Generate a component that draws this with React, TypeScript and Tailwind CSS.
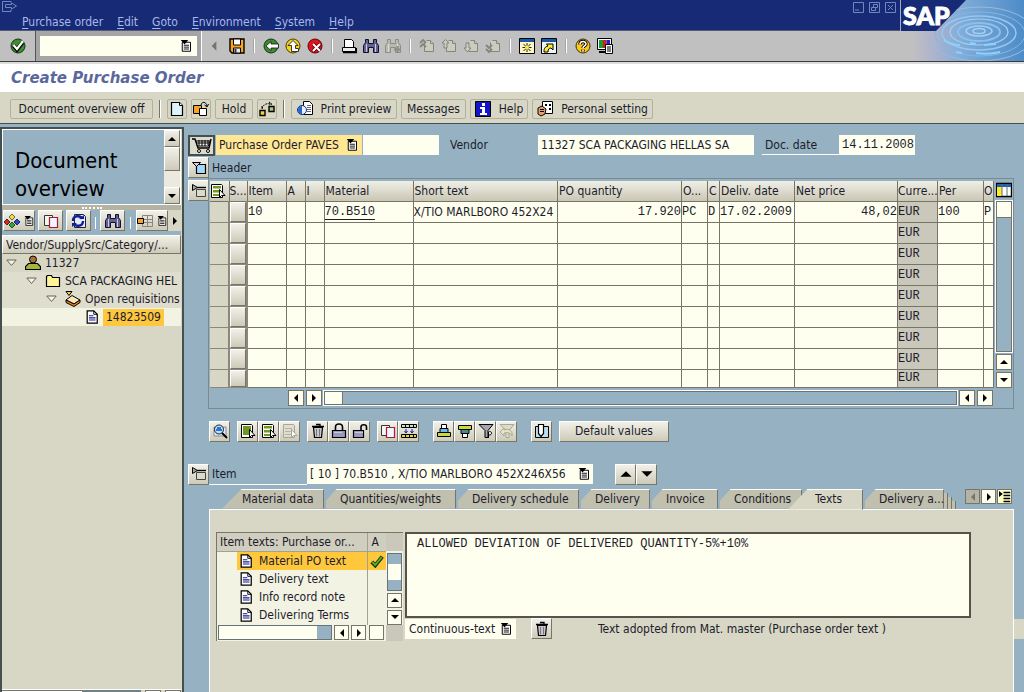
import { ReactNode, useState } from "react";
import clsx from "clsx";

type IconProps = { children: ReactNode; size?: string }

const Icon = ({ children, size = "size-4" }: IconProps) => (
  <svg viewBox="0 0 16 16" className={clsx(size, "shrink-0")} fill="none" stroke="#000" strokeWidth="1" aria-hidden="true">
    {children}
  </svg>
)

const CheckCircleIcon = () => (
  <Icon>
    <circle cx="8" cy="8" r="7" fill="#3f8a33" stroke="#123a10" />
    <path d="M3.500 7.500l3.500 4 5.500-7" stroke="#000" strokeWidth="4" />
    <path d="M3.500 7l3.500 4 6-8" stroke="#fff" strokeWidth="2.200" />
  </Icon>
)
const SaveIcon = () => (
  <Icon>
    <path d="M1 1h14v14H3l-2-2z" fill="#f5a423" strokeWidth="1.400" />
    <path d="M4.500 1h7v6h-7z" fill="#fff" />
    <path d="M4.500 10h7v5h-7z" fill="#e8e8f0" />
    <path d="M5.500 11h2v4h-2z" fill="#333" stroke="none" />
  </Icon>
)
const BackIcon = () => (
  <Icon>
    <circle cx="8" cy="8" r="7" fill="#3f8a33" stroke="#123a10" />
    <path d="M3 8l5-4.500v2.500h7.500v4H8v2.500z" fill="#fff" stroke="#111" strokeWidth=".8" />
  </Icon>
)
const ExitIcon = () => (
  <Icon>
    <circle cx="8" cy="8" r="7" fill="#f6d21c" stroke="#4a3a05" />
    <path d="M8 2.500l5 5H10.500v3h3v3h-7v-6H3z" fill="#fff" stroke="#222" strokeWidth=".9" />
  </Icon>
)
const CancelIcon = () => (
  <Icon>
    <circle cx="8" cy="8" r="7" fill="#e0121c" stroke="#5a0508" />
    <path d="M6 6l7 7M13 6l-7 7" stroke="#500" strokeWidth="3.600" />
    <path d="M6 6l7 7M13 6l-7 7" stroke="#fff" strokeWidth="2" />
  </Icon>
)
const PrintIcon = () => (
  <Icon>
    <path d="M3.500 9.500v-8h7l2 2v6z" fill="#fff" />
    <path d="M1.500 9.500h13v4h-13z" fill="#ececec" />
    <path d="M2 14.500h13.500V10" strokeWidth="1.500" />
  </Icon>
)
const BinocularsIcon = ({ dim = false }: { dim?: boolean }) => (
  <Icon>
    <g fill={dim ? "#b9b9b0" : "#62628f"} stroke={dim ? "#8d8d84" : "#10102c"}>
      <path d="M2.500 1.500h3v4h5v-4h3v3l2 3v7h-5v-5h-5v5h-5v-7l2-3z" />
      <path d="M3.500 6v8M12.500 6v8" stroke={dim ? "#dcdcd4" : "#c8c8e8"} />
      {dim && <path d="M12.500 8v7M9 11.500h7" strokeWidth="2" />}
    </g>
  </Icon>
)
const PageMoveIcon = ({ kind }: { kind: "first" | "prev" | "next" | "last" }) => (
  <Icon>
    <g stroke="#85857a" fill="#cbcbc0">
      <path d="M5.500 4.500v9h9v-8l-3-3h-4" />
      <path d="M11.500 2.500v3h3" />
      {kind == "first" && <path d="M1 5l3-3 3 3M1 9l3-3 3 3" fill="none" strokeWidth="1.800" />}
      {kind == "prev" && <path d="M1 5l3.500-3.500L8 5H6v5H3V5z" />}
      {kind == "next" && <path d="M1 10l3.500 4L8 10H6V5H3v5z" />}
      {kind == "last" && <path d="M1 7l3 3 3-3M1 11l3 3 3-3" fill="none" strokeWidth="1.800" />}
    </g>
  </Icon>
)
const NewSessionIcon = () => (
  <Icon>
    <path d="M.5 .5h15v15H.5z" fill="#fff7c4" />
    <path d="M1 1h14v3H1z" fill="#155ca8" stroke="none" />
    <path d="M8 5v9M3.500 9.500h9M4.500 6l7 7M11.500 6l-7 7" stroke="#222" />
    <circle cx="8" cy="9.500" r="2" fill="#ffe83a" stroke="none" />
  </Icon>
)
const ShortcutIcon = () => (
  <Icon>
    <path d="M.5 .5h15v15H.5z" fill="#f0f4f4" />
    <path d="M1 1h14v3H1z" fill="#155ca8" stroke="none" />
    <path d="M3 14c0-4 1-5 4-6L5.500 6H12v6l-2-2c-2 0-3 1-3 4z" fill="#ffee3a" />
  </Icon>
)
const QuestionIcon = () => (
  <Icon>
    <circle cx="8" cy="8" r="7" fill="#fbc81a" stroke="#3d3005" />
    <path d="M5 6.500c0-4 6-4 6-.5 0 2-3 1.800-3 4M8 11.500v2" stroke="#000" strokeWidth="3.400" />
    <path d="M5 6.500c0-4 6-4 6-.5 0 2-3 1.800-3 4M8 11.500v2" stroke="#fff" strokeWidth="1.600" />
  </Icon>
)
const LayoutIcon = () => (
  <Icon>
    <path d="M.5 .5h14v11H.5z" fill="#fff" />
    <path d="M2 2h4v8H2z" fill="#10a030" stroke="none" />
    <path d="M6 2h3.500v8H6z" fill="#e01818" stroke="none" />
    <path d="M9.500 2H13v8H9.500z" fill="#2020d0" stroke="none" />
    <path d="M2 14h6" strokeWidth="2" />
    <path d="M8.500 6.500h7v9h-7z" fill="#fff" />
    <path d="M10 9h4M10 11h4M10 13h4" />
  </Icon>
)
const NewPageIcon = () => (
  <Icon>
    <path d="M2.500 1.500h8l3 3v10h-11z" fill="#dff1fb" strokeWidth="1.200" />
    <path d="M10.500 1.500v3h3" fill="#fff" />
  </Icon>
)
const OtherOrderIcon = () => (
  <Icon>
    <path d="M.5 4.500h8v8h-8z" fill="#f5a423" />
    <path d="M6.500 7.500h7v7h-7z" fill="#fff" />
    <path d="M8 4c1-4 5-3.500 6 1M11.500 4l2.500 2 1.500-3" />
  </Icon>
)
const CheckDocIcon = () => (
  <Icon>
    <path d="M1 9.500h5v5H1z" fill="#ead435" strokeWidth="1.400" />
    <path d="M10 5.500h5v5h-5z" fill="#a5c878" strokeWidth="1.400" />
    <path d="M3 8c1-5 5-6 9-5M3 5v3M10 1l3 2-3 1" strokeDasharray="2 1" />
  </Icon>
)
const PreviewIcon = () => (
  <Icon>
    <path d="M6.500 .5h6l3 3v10h-9z" fill="#fff" />
    <path d="M10 4.500h4M10 6.500h4M10 8.500h4M10 10.500h4" stroke="#666" />
    <circle cx="5" cy="9" r="4.500" fill="#e6f2ff" stroke="#0c2c82" />
    <path d="M5 5a4 4 0 000 8z" fill="#2a66d0" stroke="none" />
  </Icon>
)
const InfoIcon = () => (
  <Icon>
    <path d="M.5 .5h15v15H.5z" fill="#1414c8" />
    <path d="M7 2h3v3H7zM5 6h5v6h2v2H5v-2h2V8H5z" fill="#fff" stroke="none" />
  </Icon>
)
const PersonalIcon = () => (
  <Icon>
    <path d="M5.500 .5h10v12h-7l-3-4z" fill="#fff" />
    <path d="M8 3h2v2H8zM12 3h2v2h-2zM12 7h2v2h-2z" fill="#000" stroke="none" />
    <path d="M1 7l4-2 4 3-1 5-4 2-3-2z" fill="#e8a06c" />
    <path d="M3 8.500h4M3 10.500h4" />
  </Icon>
)
const ListIcon = ({ size = "size-3" }: { size?: string }) => (
  <Icon size={size}>
    <path d="M3 3h11v12H3z" fill="#fff" strokeWidth="1.300" />
    <path d="M5 7h7M5 9.500h7M5 12h7" strokeWidth="1.200" />
    <path d="M1 0h10L6 6z" fill="#000" stroke="none" />
  </Icon>
)
const CartIcon = () => (
  <svg viewBox="0 0 22 16" className="h-4 w-[22px]" fill="none" stroke="#000" aria-hidden="true">
    <path d="M1 2h3l3 9h11l2-9" strokeWidth="1.400" />
    <path d="M5 4h14l-1.500 5H6.500z" fill="#fff" />
    <path d="M8 3v6M11 3v6M14 3v6M17 3v5M5 6h13" />
    <circle cx="8" cy="14" r="1.500" fill="#fff" />
    <circle cx="17" cy="14" r="1.500" fill="#fff" />
  </svg>
)
const ExpandedIcon = () => (
  <Icon>
    <path d="M5.500 4.500h9v9h-9z" fill="#a5d8fa" strokeWidth="1.200" />
    <path d="M1.500 2.500h8l-4 4z" fill="#d9ccf0" />
  </Icon>
)
const CollapsedIcon = () => (
  <Icon>
    <path d="M5.500 6.500h9v7h-9z" fill="#dcdacb" stroke="#444" />
    <path d="M1.500 1.500l5 3-5 3z" fill="#aaa" />
    <path d="M6 4.500h9" strokeWidth="1.400" />
  </Icon>
)
const SelectRowsIcon = ({ tone = "rows" }: { tone?: "all" | "rows" | "off" }) => (
  <Icon>
    <path d="M1.500 1.500h10l1 1v12h-11z" fill={tone == "off" ? "#e0decf" : "#fff"} stroke={tone == "off" ? "#a8a698" : "#000"} />
    {tone == "all" && <path d="M3 3h8v9H3z" fill="#6e9a22" stroke="none" />}
    {tone == "rows" && <path d="M3 3h8v2.500H3zM3 7h8v2.500H3zM3 11h8v2H3z" fill="#6e9a22" stroke="none" />}
    {tone == "off" && <path d="M3 5.500h7M3 8.500h7M3 11.500h7" stroke="#b5b3a5" />}
    <path d="M9.500 6.500v8l2-2h3.500z" fill="#fff" stroke={tone == "off" ? "#a8a698" : "#000"} />
  </Icon>
)
const MagnifierIcon = () => (
  <Icon>
    <path d="M2 4h12v9H2z" fill="#dcecf4" stroke="#889" />
    <circle cx="7" cy="6.500" r="4.500" fill="#bfe2fa" stroke="#123" />
    <path d="M4 7h6M5 5h4" stroke="#2a72d8" strokeWidth="2" />
    <path d="M10 10l5 5" strokeWidth="2" />
  </Icon>
)
const TrashIcon = () => (
  <Icon>
    <path d="M3.500 4.500h9l-1 10h-7z" fill="#c6c6cc" strokeWidth="1.200" />
    <path d="M2 3.500h12M6 1.500h4v2" strokeWidth="1.300" />
    <path d="M6.500 6v7.500M9.500 6v7.500" stroke="#777" />
  </Icon>
)
const LockIcon = ({ open = false }: { open?: boolean }) => (
  <Icon>
    <path d={open ? "M9 7V4c0-3 5.500-3 5.500 0v3" : "M4.500 7V4c0-4 7-4 7 0v3"} strokeWidth="1.600" />
    <path d={open ? "M1.500 7.500h10v7h-10z" : "M1.500 7.500h13v7h-13z"} fill="#9a9ac0" strokeWidth="1.200" />
    <path d="M3 9.500h8" stroke="#c8c8e0" />
  </Icon>
)
const CopyIcon = () => (
  <Icon>
    <path d="M1.500 2.500h8v10h-8z" fill="#f6f6ee" stroke="#333" />
    <path d="M6.500 4.500h8v10h-8z" fill="#eef6ff" stroke="#b01836" strokeWidth="1.200" />
  </Icon>
)
const InsertRowsIcon = () => (
  <Icon>
    <path d="M.5 1.500h15v3H.5zM.5 11.500h15v3H.5z" fill="#c8e4cc" />
    <path d="M1 13h14" stroke="#f0d820" strokeWidth="2" />
    <path d="M4.500 1v4M8.500 1v4M12.500 1v4M4.500 11v4M8.500 11v4M12.500 11v4" />
    <path d="M5 6v4M3.500 8L5 10l1.500-2M11 6v4M9.500 8l1.500 2 1.500-2" stroke="#1818c0" />
  </Icon>
)
const SortIcon = ({ up = false }: { up?: boolean }) => (
  <Icon>
    <g transform={up ? undefined : "matrix(1 0 0 -1 0 16)"}>
      <path d="M5.500 1.500h5v4h-5z" fill="#fff" />
      <path d="M4 5.500h8v4H4z" fill={up ? "#6fb6e8" : "#4c8a86"} />
      <path d="M1.500 9.500h13v4h-13z" fill="#cbd93a" />
    </g>
  </Icon>
)
const FilterIcon = ({ dim = false }: { dim?: boolean }) => (
  <Icon>
    <g stroke={dim ? "#aaa793" : "#000"}>
      <path d="M1 1.500h14l-5 6v7H7v-7z" fill={dim ? "#dedbc8" : "#a6a6ac"} />
      {dim ? <path d="M1 9l4-4v2c5-2 9 1 8 6-1-3-4-4-8-3v3z" fill="#e8e4cc" /> : <path d="M10.500 15V9c4-2 4 4 0 3" fill="#fff" />}
    </g>
  </Icon>
)
const ClipboardIcon = () => (
  <Icon>
    <path d="M1.500 3.500h13v11h-13z" fill="#b9dcf4" />
    <path d="M4.500 1.500h5v9l-2.500 3-2.500-3z" fill="#fff" strokeWidth="1.200" />
    <path d="M9.500 1.500v3" />
  </Icon>
)
const TableSettingsIcon = () => (
  <Icon>
    <path d="M.5 1.500h15v13H.5z" fill="#fff" strokeWidth="1.400" />
    <path d="M1 2h14v3H1z" fill="#1864b0" stroke="none" />
    <path d="M1 5h5v9H1z" fill="#ffe92c" stroke="none" />
    <path d="M6 2v12M11 2v12" stroke="#667" />
  </Icon>
)
const DocIcon = () => (
  <Icon size="size-[14px]">
    <path d="M2.500 1h7.500l4 4v10h-11.500z" fill="#fff" strokeWidth="1.400" />
    <path d="M10 1v4h4" />
    <path d="M4.500 6.500h5M4.500 9h7.500M4.500 11.500h7.500" stroke="#18188c" strokeWidth="1.200" />
  </Icon>
)
const PersonIcon = () => (
  <Icon>
    <path d="M.5 14.500v-3l3-3h9l3 3v3z" fill="#a3b63c" strokeWidth="1.200" />
    <circle cx="8" cy="4.500" r="3.500" fill="#a8703e" />
  </Icon>
)
const FolderIcon = () => (
  <Icon>
    <path d="M1.500 3.500l1-1h4l1 2h7v9h-13z" fill="#fff596" strokeWidth="1.200" />
  </Icon>
)
const RequisitionIcon = () => (
  <Icon>
    <path d="M1 9l6-4.500 8 4.500-6 4z" fill="#fde5b4" />
    <path d="M1 9v2.500l8 4 6-4V9l-6 4z" fill="#e58a1c" />
    <path d="M1 .5h6l-3 4z" fill="#f2d83a" />
  </Icon>
)
const VariantIcon = () => (
  <Icon>
    <path d="M8 1l3 3-3 3-3-3z" fill="#f0e030" stroke="#665" />
    <path d="M3 6l3 3-3 3-3-3z" fill="#d02828" stroke="#522" />
    <path d="M13 6l3 3-3 3-3-3z" fill="#2848d0" stroke="#225" />
    <path d="M8 9l3 3-3 3-3-3z" fill="#30a838" stroke="#252" />
  </Icon>
)
const RefreshIcon = () => (
  <Icon>
    <path d="M3.500 1.500h9l2 2v11h-11z" fill="#e4ecfa" stroke="#223" />
    <path d="M2 8c0-6 8-6 9-2M12 8c0 6-8 6-9 2" stroke="#10209c" strokeWidth="2.400" />
    <path d="M8 6h5V2zM6 10H1v4z" fill="#10209c" stroke="none" />
  </Icon>
)
const GridIcon = () => (
  <Icon>
    <path d="M5.500 2.500h10v11h-10zM5.500 6.500h10M5.500 9.500h10M10.500 2.500v11" stroke="#88877c" />
    <path d="M.5 5.500h6v5h-6z" fill="#f5a423" />
  </Icon>
)
const TickIcon = () => (
  <Icon size="size-[14px]">
    <path d="M2 9l4 4L14 3" stroke="#123a0c" strokeWidth="4.500" />
    <path d="M2.500 9L6 12.500 13.500 3.500" stroke="#6ab02c" strokeWidth="2" />
  </Icon>
)
const TabListIcon = () => (
  <Icon size="size-3">
    <path d="M6 2h9M6 6h9M6 10h9M6 14h9" strokeWidth="2" />
    <path d="M0 0l5 4-5 4z" fill="#000" stroke="none" />
  </Icon>
)

const arrowPaths = { up: "M1 7l4-4 4 4z", down: "M1 3l4 4 4-4z", left: "M7 1L3 5l4 4z", right: "M3 1l4 4-4 4z" }

type ArrowButtonProps = { dir: keyof typeof arrowPaths; label: string; className?: string; iconClass?: string; disabled?: boolean }

const ArrowButton = ({ dir, label, className = "size-4 border border-[#77756a] bg-[#fffff0]", iconClass = "size-[10px]", disabled }: ArrowButtonProps) => (
  <button type="button" aria-label={label} disabled={disabled} className={clsx("flex shrink-0 items-center justify-center", className)}>
    <svg viewBox="0 0 10 10" className={iconClass} fill={disabled ? "#77756a" : "#000"} aria-hidden="true">
      <path d={arrowPaths[dir]} />
    </svg>
  </button>
)

const raised = "border border-t-white border-l-white border-r-[#77756a] border-b-[#77756a] bg-linear-to-b from-[#f2f1e8] to-[#cdcab8]"

const IconButton = ({ label, children, className = "w-[21px]" }: { label: string; children: ReactNode; className?: string }) => (
  <button type="button" title={label} aria-label={label} className={clsx("flex h-[21px] shrink-0 items-center justify-center gap-1", raised, className)}>
    {children}
  </button>
)

const FlatButton = ({ label, icon, className }: { label?: string; icon?: ReactNode; className: string }) => (
  <button type="button" className={clsx("flex h-5 shrink-0 items-center justify-center gap-2 rounded-xs border border-[#b3b09c]", className)}>
    {icon}
    {label}
  </button>
)

const Separator = () => <span className="mx-2 h-[14px] w-[2px] shrink-0 border-l border-[#a5a5a5] bg-white" />

const menus = ["Purchase order", "Edit", "Goto", "Environment", "System", "Help"]

const toolbarGroups = [
  [
    { label: "Back", icon: <BackIcon /> },
    { label: "Exit", icon: <ExitIcon /> },
    { label: "Cancel", icon: <CancelIcon /> },
  ],
  [
    { label: "Print", icon: <PrintIcon /> },
    { label: "Find", icon: <BinocularsIcon /> },
    { label: "Find next", icon: <BinocularsIcon dim /> },
  ],
  [
    { label: "First page", icon: <PageMoveIcon kind="first" /> },
    { label: "Previous page", icon: <PageMoveIcon kind="prev" /> },
    { label: "Next page", icon: <PageMoveIcon kind="next" /> },
    { label: "Last page", icon: <PageMoveIcon kind="last" /> },
  ],
  [
    { label: "New session", icon: <NewSessionIcon /> },
    { label: "Create shortcut", icon: <ShortcutIcon /> },
  ],
  [
    { label: "Help", icon: <QuestionIcon /> },
    { label: "Customize layout", icon: <LayoutIcon /> },
  ],
]

const SapLogo = () => (
  <svg viewBox="0 0 124 61" className="h-[61px] w-[124px] shrink-0" role="img" aria-label="SAP">
    <defs>
      <linearGradient id="water" x1="0" y1="0" x2="1" y2="0">
        <stop offset="0" stopColor="#c0c0c0" />
        <stop offset=".18" stopColor="#b0b4cc" />
        <stop offset=".45" stopColor="#80acd8" />
        <stop offset="1" stopColor="#4d8cc8" />
      </linearGradient>
      <clipPath id="waterArea">
        <path d="M66 0h58v61H14V48L30 31h6z" />
      </clipPath>
    </defs>
    <path d="M0 0h124v61H0z" fill="#c0c0c0" />
    <path d="M12 0h112v61H12z" fill="url(#water)" />
    <path d="M0 0h66L36 31H0z" fill="#162a76" />
    <g clipPath="url(#waterArea)" fill="none" stroke="#a4d0f4">
      <ellipse cx="79" cy="31" rx="6" ry="2.500" strokeWidth="1.500" />
      <ellipse cx="79" cy="31" rx="13" ry="5" strokeWidth="1.500" />
      <ellipse cx="79" cy="32" rx="21" ry="9" stroke="#8cc0ee" strokeWidth="2" />
      <ellipse cx="79" cy="32" rx="29" ry="13" strokeWidth="1.200" />
      <ellipse cx="79" cy="33" rx="37" ry="17" stroke="#98c6ee" strokeWidth="1.500" />
      <ellipse cx="80" cy="34" rx="45" ry="22" stroke="#84b6e2" />
      <ellipse cx="80" cy="34" rx="54" ry="27" stroke="#9dbadb" />
      <path d="M44 40q7 5 16 5M76 53q12 2 24-1M56 52l6 1M84 45l12-1M70 43l6 1" stroke="#8ad2ff" strokeWidth="2" />
    </g>
    <path d="M0 0v31" stroke="#a8acc0" strokeWidth="2" />
    <text x="3" y="25" fill="#fff" stroke="#fff" strokeWidth="1" fontFamily="Lato, sans-serif" fontWeight="900" fontSize="25">SAP</text>
  </svg>
)

const SystemHeader = () => (
  <header className="flex border-b border-[#3c3c3c] bg-[#c0c0c0]">
    <div className="min-w-0 flex-1">
      <div className="flex h-[31px] justify-between border-b border-[#55587a] bg-[#162a76]">
        <div className="text-[#a9b8e6]">
          <svg viewBox="0 0 16 13" className="ml-px h-[13px] w-4" fill="none" stroke="#7386c0" aria-hidden="true">
            <path d="M10 2.500V1.500H1.500v10H10v-2M4.500 4.500h6V3l5 3-5 3V7.500h-6z" />
          </svg>
          <nav className="ml-[22px] flex gap-[14px]">
            {menus.map(menu => (
              <button type="button" key={menu} className="h-[18px] leading-[18px] whitespace-nowrap">
                <span className="underline underline-offset-2">{menu[0]}</span>{menu.slice(1)}
              </button>
            ))}
          </nav>
        </div>
        <div className="flex gap-[5px] pt-[2px] pr-1">
          {["M2 8h4", "M4.500 2.500h4v3h-4zM2.500 5.500h4v3h-4z", "M3 3l5 5M8 3l-5 5"].map((d, i) => (
            <button type="button" key={d} aria-label={["Minimize", "Restore", "Close"][i]} className="size-[11px]">
              <svg viewBox="0 0 11 11" fill="none" stroke="#7386c0" aria-hidden="true">
                <path d="M.5 .5h10v10H.5z" />
                <path d={d} />
              </svg>
            </button>
          ))}
        </div>
      </div>
      <div className="flex h-[30px] items-center">
        <button type="button" aria-label="Enter" className="flex h-full w-9 items-center justify-center border-r border-[#555]">
          <CheckCircleIcon />
        </button>
        <div className="flex h-full items-center border-r border-white bg-[#a5a5a5] px-1">
          <div className="relative">
            <input aria-label="Command" className="h-5 w-[157px] bg-[#fffff0] px-1 outline-none" />
            <span className="absolute top-1 right-[5px]"><ListIcon /></span>
          </div>
        </div>
        <ArrowButton dir="left" label="Hide command field" disabled className="ml-1 w-4" iconClass="size-3" />
        <button type="button" aria-label="Save" className="ml-[7px]"><SaveIcon /></button>
        {toolbarGroups.map((group, i) => (
          <div key={i} className="flex items-center">
            <Separator />
            <div className="flex gap-[6px]">
              {group.map(item => (
                <button type="button" key={item.label} title={item.label} aria-label={item.label}>{item.icon}</button>
              ))}
            </div>
          </div>
        ))}
      </div>
    </div>
    <SapLogo />
  </header>
)

const Divider = () => <span className="mx-[2px] h-[18px] w-[2px] shrink-0 border-l border-[#77756a] bg-white" />

const AppToolbar = () => (
  <div className="flex h-[31px] items-center gap-1 border-t border-b border-t-[#d8d7c6] border-b-[#44504f] bg-[#d8d7c6] px-[10px]">
    <FlatButton label="Document overview off" className="w-[143px]" />
    <Divider />
    <FlatButton icon={<NewPageIcon />} className="w-5" />
    <FlatButton icon={<OtherOrderIcon />} className="w-5" />
    <FlatButton label="Hold" className="w-[38px]" />
    <FlatButton icon={<CheckDocIcon />} className="w-5" />
    <Divider />
    <FlatButton label="Print preview" icon={<PreviewIcon />} className="w-[106px]" />
    <FlatButton label="Messages" className="w-[65px]" />
    <FlatButton label="Help" icon={<InfoIcon />} className="w-[58px]" />
    <FlatButton label="Personal setting" icon={<PersonalIcon />} className="w-[121px]" />
  </div>
)

const treeRows = [
  { label: "11327", icon: <PersonIcon />, pad: "pl-1", open: true },
  { label: "SCA PACKAGING HEL", icon: <FolderIcon />, pad: "pl-6", open: true },
  { label: "Open requisitions", icon: <RequisitionIcon />, pad: "pl-11", open: true },
  { label: "14823509", icon: <DocIcon />, pad: "pl-[83px]", open: false },
]

const DocumentOverview = () => (
  <aside className="mt-[3px] flex w-[184px] shrink-0 flex-col border-2 border-b-0 border-[#44504f] bg-[#d8d7c6] pr-px">
    <div className="flex h-[76px] shrink-0 border border-white bg-[#95b1c2]">
      <h2 className="flex-1 pt-[17px] pl-3 text-[22px] leading-7 text-black">Document overview</h2>
      <div className="flex w-4 flex-col bg-[#eceadf]">
        <ArrowButton dir="up" label="Scroll up" className={clsx("h-[17px] w-4", raised)} />
        <span className={clsx("h-6 w-4", raised)} />
        <span className="flex-1" />
        <ArrowButton dir="down" label="Scroll down" className={clsx("h-[17px] w-4", raised)} />
      </div>
    </div>
    <div className="flex h-[5px] shrink-0 items-center justify-center bg-[#b5b3a4]">
      <span className="w-5 border-t-2 border-dotted border-white" />
    </div>
    <div className="flex h-[25px] shrink-0 items-start gap-[3px] bg-[#95b1c2] pl-px">
      <IconButton label="Selection variant" className="w-[32px]"><VariantIcon /><ListIcon size="size-[10px]" /></IconButton>
      <IconButton label="Copy" className="w-[25px]"><CopyIcon /></IconButton>
      <IconButton label="Refresh" className="w-[25px]"><RefreshIcon /></IconButton>
      <span className="mx-px h-3 w-px self-center bg-white" />
      <IconButton label="Find" className="w-[25px]"><BinocularsIcon /></IconButton>
      <span className="mx-[2px] h-3 w-px self-center bg-white" />
      <IconButton label="Layout" className="w-[32px]"><GridIcon /><ListIcon size="size-[10px]" /></IconButton>
      <ArrowButton dir="right" label="More" className="-ml-[3px] h-[21px] flex-1 bg-[#d8d7c6]" />
    </div>
    <div className={clsx("h-[19px] shrink-0 truncate pl-[3px] leading-[18px]", raised)}>Vendor/SupplySrc/Category/...</div>
    <ul>
      {treeRows.map((row, i) => (
        <li
          key={row.label}
          className={clsx("flex h-[18px] items-center gap-1 overflow-hidden whitespace-nowrap", row.pad, i == 0 && "bg-[#d8d7c6]", (i == 1 || i == 2) && "bg-[#dfddcd]", i == 3 && "bg-[#f3f3e4]")}
        >
          {row.open && (
            <button type="button" aria-label={`Collapse ${row.label}`} className="mr-1 shrink-0">
              <svg viewBox="0 0 11 8" className="h-2 w-[11px]" fill="#f4f4e8" stroke="#66645a" aria-hidden="true"><path d="M.8 1h9.400L5.500 6.500z" /></svg>
            </button>
          )}
          {row.icon}
          <span className={clsx("leading-[17px]", i == 3 && "bg-[#ffc83c] px-[3px]")}>{row.label}</span>
        </li>
      ))}
    </ul>
    <div className="mt-auto flex h-[3px] border-t border-white">
      <span className="w-20 border-t border-[#77756a] bg-white" />
      <span className="flex-1 bg-[#6f8086]" />
      <span className="ml-1 w-4 border border-b-0 border-[#77756a] bg-white" />
      <span className="ml-1 w-4 border border-b-0 border-[#77756a] bg-white" />
    </div>
  </aside>
)

const OrderHeader = () => (
  <div>
    <div className="flex h-5 items-center">
      <button type="button" aria-label="Cart" className="flex h-[21px] w-[27px] items-center justify-center border-2 border-[#44504f] bg-[#dddbcb]">
        <CartIcon />
      </button>
      <div className="relative ml-px">
        <select aria-label="Order type" className="h-5 w-[146px] appearance-none bg-[#ffe793] pl-[3px] outline-none">
          <option>Purchase Order PAVES</option>
        </select>
        <span className="pointer-events-none absolute top-1 right-1"><ListIcon /></span>
      </div>
      <input aria-label="Order number" className="ml-px h-5 w-[76px] bg-[#fffff0] px-1 outline-none" />
      <label htmlFor="vendor" className="ml-[11px] w-[88px]">Vendor</label>
      <input id="vendor" defaultValue="11327 SCA PACKAGING HELLAS SA" className="h-5 w-[216px] bg-[#fffff0] px-[3px] outline-none" />
      <label htmlFor="docDate" className="ml-2 h-5 w-[77px] border-b border-white pl-[3px] leading-5">Doc. date</label>
      <input id="docDate" defaultValue="14.11.2008" className="h-5 w-[76px] bg-[#fffff0] pl-[3px] font-['Liberation_Mono',monospace] outline-none" />
    </div>
    <div className="mt-[2px] flex h-[21px] items-center gap-[3px]">
      <IconButton label="Expand header"><ExpandedIcon /></IconButton>
      <span>Header</span>
    </div>
  </div>
)

const columns = [
  { label: "", width: "w-[19px]" },
  { label: "S...", width: "w-[18px]" },
  { label: "Item", width: "w-[39px] pl-px" },
  { label: "A", width: "w-[19px] pl-px" },
  { label: "I", width: "w-[19px] pl-px" },
  { label: "Material", width: "w-[89px] pl-px" },
  { label: "Short text", width: "pl-px" },
  { label: "PO quantity", width: "w-[124px] pl-px" },
  { label: "O...", width: "w-[26px] pl-px" },
  { label: "C", width: "w-[12px] pl-px" },
  { label: "Deliv. date", width: "w-[75px] pl-px" },
  { label: "Net price", width: "w-[103px] pl-px" },
  { label: "Curre...", width: "w-[40px]" },
  { label: "Per", width: "w-[46px] pl-px" },
  { label: "O", width: "w-[10px]" },
]

const firstRow = ["10", "", "", "70.B510", "X/TIO MARLBORO 452X24", "17.920", "PC", "D", "17.02.2009", "48,02", "EUR", "100", "P"]
const emptyRow = firstRow.map((_, i) => (i == 10 ? "EUR" : ""))
const rows = [firstRow, ...Array.from({ length: 8 }, () => emptyRow)]

const ItemTable = () => (
  <div className="mr-[10px] min-w-0 flex-1 border border-[#7b8a90] pt-[2px] pl-px">
    <div className="flex">
      <table className="w-full flex-1 table-fixed border-collapse">
        <thead>
          <tr className="h-5">
            {columns.map((col, i) => (
              <th
                key={i}
                className={clsx("overflow-hidden border-r border-b border-r-[#77756a] border-b-[#77756a] bg-linear-to-b from-[#f0efe6] to-[#c9c6b4] py-0 pr-0 text-left font-normal whitespace-nowrap", col.width)}
              >
                {i == 0 ? <button type="button" aria-label="Select all" className="flex"><SelectRowsIcon /></button> : col.label}
              </th>
            ))}
          </tr>
        </thead>
        <tbody>
          {rows.map((row, r) => {
            const last = r == rows.length - 1
            return (
              <tr key={r} className={last ? "h-[18px]" : "h-[21px]"}>
                <td className="border-r-2 border-b border-[#8a887c] bg-[#d8d7c6] p-0" />
                <td className="border-r-2 border-b border-[#8a887c] p-0">
                  <button type="button" aria-label={`Select row ${r + 1}`} className={clsx("block w-full", last ? "h-[17px]" : "h-5", raised)} />
                </td>
                {row.map((cell, c) => (
                  <td
                    key={c}
                    className={clsx(
                      "overflow-hidden border-r border-b border-[#77756a] p-0 leading-4 whitespace-nowrap",
                      c == 10 ? "bg-[#cac8bb]" : "bg-[#fffff0]",
                      c != 4 && "font-['Liberation_Mono',monospace]",
                      (c == 5 || c == 9) && "text-right",
                    )}
                  >
                    {c == 3 && cell ? <a href="#material" className="underline underline-offset-4">{cell}</a> : cell}
                  </td>
                ))}
              </tr>
            )
          })}
        </tbody>
      </table>
      <div className="flex w-[19px] shrink-0 flex-col items-center gap-[2px]">
        <button type="button" aria-label="Configure table" className="h-[18px]"><TableSettingsIcon /></button>
        <div className="flex w-4 flex-1 flex-col border border-[#77756a] outline outline-white">
          <span className="h-4 border-b border-[#77756a] bg-[#fffff0]" />
        </div>
        <ArrowButton dir="up" label="Scroll up" />
        <ArrowButton dir="down" label="Scroll down" />
      </div>
    </div>
    <div className="flex h-5 items-center gap-[2px] pr-5 pl-[78px]">
      <ArrowButton dir="left" label="Scroll fixed columns left" />
      <ArrowButton dir="right" label="Scroll fixed columns right" />
      <div className="flex h-[14px] flex-1 border border-[#66747a] outline outline-white">
        <span className="w-[18px] border-r border-[#77756a] bg-[#fffff0]" />
      </div>
      <ArrowButton dir="left" label="Scroll left" />
      <ArrowButton dir="right" label="Scroll right" />
    </div>
  </div>
)

const itemToolGroups = [
  { gap: "", tools: [{ label: "Details", icon: <MagnifierIcon /> }] },
  {
    gap: "ml-[7px]",
    tools: [
      { label: "Select all", icon: <SelectRowsIcon tone="all" /> },
      { label: "Select block", icon: <SelectRowsIcon /> },
      { label: "Deselect all", icon: <SelectRowsIcon tone="off" /> },
    ],
  },
  {
    gap: "ml-[7px]",
    tools: [
      { label: "Delete", icon: <TrashIcon /> },
      { label: "Lock", icon: <LockIcon /> },
      { label: "Unlock", icon: <LockIcon open /> },
    ],
  },
  {
    gap: "ml-[7px]",
    tools: [
      { label: "Copy", icon: <CopyIcon /> },
      { label: "Insert rows", icon: <InsertRowsIcon /> },
    ],
  },
  {
    gap: "ml-[14px]",
    tools: [
      { label: "Sort ascending", icon: <SortIcon up /> },
      { label: "Sort descending", icon: <SortIcon /> },
      { label: "Filter", icon: <FilterIcon /> },
      { label: "Undo filter", icon: <FilterIcon dim /> },
    ],
  },
  { gap: "ml-[14px]", tools: [{ label: "Purchase info", icon: <ClipboardIcon /> }] },
]

const ItemToolbar = () => (
  <div className="mt-3 flex h-[21px] pl-[21px]">
    {itemToolGroups.map((group, i) => (
      <div key={i} className={clsx("flex", group.gap)}>
        {group.tools.map(tool => <IconButton key={tool.label} label={tool.label}>{tool.icon}</IconButton>)}
      </div>
    ))}
    <button type="button" className={clsx("ml-[7px] w-[110px]", raised)}>Default values</button>
  </div>
)

const shortSlant = "[clip-path:polygon(11px_0,100%_0,100%_100%,0_100%,0_12px)]"
const longSlant = "[clip-path:polygon(20px_0,100%_0,100%_100%,0_100%)]"

const tabs = [
  { label: "Material data", size: "w-[102px] pl-5", shape: longSlant },
  { label: "Quantities/weights", size: "w-[130px] pl-[14px]", shape: shortSlant },
  { label: "Delivery schedule", size: "w-[121px] pl-[14px]", shape: shortSlant },
  { label: "Delivery", size: "w-[69px] pl-[14px]", shape: shortSlant },
  { label: "Invoice", size: "w-[66px] pl-[14px]", shape: shortSlant },
  { label: "Conditions", size: "w-[82px] pl-[14px]", shape: shortSlant },
  { label: "Texts", size: "-ml-4 w-[75px] pl-[27px]", shape: longSlant },
  { label: "Delivery a...", size: "w-[79px] pl-[14px]", shape: shortSlant },
]

const itemTexts = ["Material PO text", "Delivery text", "Info record note", "Delivering Terms"]

const ItemDetail = () => {
  const [activeTab, setActiveTab] = useState("Texts")
  const [activeText, setActiveText] = useState(itemTexts[0])

  return (
    <>
      <div className="mt-[22px] flex h-[21px] items-center">
        <IconButton label="Expand item"><CollapsedIcon /></IconButton>
        <label htmlFor="item" className="h-full w-[98px] border-b border-white pl-[3px] leading-[21px]">Item</label>
        <div className="relative">
          <select id="item" className="h-5 w-[286px] appearance-none bg-[#fffff0] pl-[3px] outline-none">
            <option>[ 10 ] 70.B510 , X/TIO MARLBORO 452X246X56</option>
          </select>
          <span className="pointer-events-none absolute top-1 right-[3px]"><ListIcon /></span>
        </div>
        <ArrowButton dir="up" label="Previous item" className={clsx("ml-[22px] h-[21px] w-[21px]", raised)} iconClass="size-[14px]" />
        <ArrowButton dir="down" label="Next item" className={clsx("h-[21px] w-[21px]", raised)} iconClass="size-[14px]" />
      </div>

      <div className="mt-1 flex h-5 pr-3 pl-[34px]">
        <div role="tablist" className="flex gap-[2px]">
          {tabs.map(tab => (
            <button
              type="button"
              role="tab"
              key={tab.label}
              aria-selected={activeTab == tab.label}
              onClick={() => setActiveTab(tab.label)}
              className={clsx(
                "border-t border-r border-t-white border-r-[#77756a] text-left leading-[19px] whitespace-nowrap",
                activeTab == tab.label ? "relative h-[21px] bg-[#d8d7c6]" : "h-5 bg-[#c1bfae]",
                tab.size,
                tab.shape,
              )}
            >
              {tab.label}
            </button>
          ))}
        </div>
        <div className="flex items-end">
          <span className="h-4 w-1 border-r border-[#77756a] bg-[#c1bfae]" />
          <span className="h-3 w-1 border-r border-[#77756a] bg-[#c1bfae]" />
          <span className="h-2 w-1 border-r border-[#77756a] bg-[#c1bfae]" />
        </div>
        <div className="ml-auto flex items-center gap-px pb-1">
          <ArrowButton dir="left" label="Previous tab" disabled className="size-[15px] border border-[#77756a] bg-[#b5b3a4]" />
          <ArrowButton dir="right" label="Next tab" className="size-[15px] border border-[#77756a] bg-[#fffff0]" />
          <button type="button" aria-label="Tab list" className="flex size-[15px] items-center justify-center border border-[#77756a] bg-[#ffffc8]"><TabListIcon /></button>
        </div>
      </div>

      <div className="ml-[21px] flex flex-1">
        <div className="flex min-w-0 flex-1 items-start gap-[2px] border-t border-l border-white bg-[#d8d7c6] pt-[22px] pl-[6px]">
          <div className="flex h-[109px] w-[187px] shrink-0 flex-col border-t border-l border-[#77756a] bg-[#f3f3e4]">
            <div className="flex min-h-0 flex-1">
              <table className="flex-1 table-fixed border-collapse">
                <thead>
                  <tr className="h-[19px] bg-[#d0cebf]">
                    <th className="w-[150px] border-r border-b border-[#a3a192] p-0 pl-[3px] text-left font-normal whitespace-nowrap">Item texts: Purchase or...</th>
                    <th className="w-[18px] border-b border-[#a3a192] p-0 pl-[3px] text-left font-normal">A</th>
                  </tr>
                </thead>
                <tbody>
                  {itemTexts.map((text, i) => (
                    <tr key={text} className="h-[18px]">
                      <td className="border-r border-[#a3a192] p-0 pl-5">
                        <button
                          type="button"
                          onClick={() => setActiveText(text)}
                          className={clsx("flex h-[18px] w-full items-center gap-[6px] pl-[2px] whitespace-nowrap", activeText == text && "bg-[#ffc83c]")}
                        >
                          <DocIcon />
                          {text}
                        </button>
                      </td>
                      <td className={clsx("p-0 pl-[2px]", activeText == text && "bg-[#ffc83c]")}>{i == 0 && <TickIcon />}</td>
                    </tr>
                  ))}
                </tbody>
              </table>
              <div className="flex w-[17px] flex-col items-center gap-[2px] bg-[#f3f3e4]">
                <span className="h-[18px] w-full bg-[#cac8bb]" />
                <div className="flex w-[15px] flex-1 flex-col justify-center border border-[#66747a] bg-[#95b1c2]">
                  <span className="h-4 bg-[#fffff0]" />
                </div>
                <ArrowButton dir="up" label="Scroll texts up" className="size-[15px] border border-[#77756a] bg-[#fffff0]" />
                <ArrowButton dir="down" label="Scroll texts down" className="size-[15px] border border-[#77756a] bg-[#fffff0]" />
              </div>
            </div>
            <div className="flex h-4 items-center gap-[2px] pl-px">
              <div className="flex h-[15px] flex-1 justify-end border border-[#66747a] bg-[#fffff0]">
                <span className="w-[14px] bg-[#95b1c2]" />
              </div>
              <ArrowButton dir="left" label="Scroll texts left" className="size-[15px] border border-[#77756a] bg-[#fffff0]" />
              <ArrowButton dir="right" label="Scroll texts right" className="size-[15px] border border-[#77756a] bg-[#fffff0]" />
              <span className="ml-px size-[15px] border border-[#77756a] bg-[#fffff0]" />
              <span className="h-4 w-[17px] bg-[#cac8bb]" />
            </div>
          </div>

          <div className="min-w-0 flex-1">
            <div className="pr-[42px]">
              <textarea
                aria-label="Item text"
                defaultValue="ALLOWED DEVIATION OF DELIVERED QUANTITY-5%+10%"
                className="block h-[86px] w-full resize-none border-2 border-[#55534a] bg-[#fffff0] py-[2px] pl-[10px] font-['Liberation_Mono',monospace] leading-4 outline-none"
              />
            </div>
            <div className="mt-px flex h-5 items-center">
              <div className="relative">
                <select aria-label="Text format" className="h-5 w-[111px] appearance-none bg-[#fffff0] pl-1 outline-none">
                  <option>Continuous-text</option>
                </select>
                <span className="pointer-events-none absolute top-1 right-1"><ListIcon /></span>
              </div>
              <div className="ml-[15px]"><IconButton label="Delete text"><TrashIcon /></IconButton></div>
              <p className="ml-[46px] whitespace-nowrap">Text adopted from Mat. master (Purchase order text )</p>
            </div>
          </div>
        </div>
        <div className="w-[11px] shrink-0 border-l border-white pt-[110px]">
          <div className="h-5 bg-[#d8d7c6]" />
        </div>
      </div>
    </>
  )
}

const App = () => {
  return (
    <div className="flex min-h-screen flex-col bg-[#95b1c2] font-['DejaVu_Sans_Condensed','DejaVu_Sans',sans-serif] text-[12px] leading-4 text-[#1c1c2c]">
      <SystemHeader />
      <div className="border-t-2 border-b border-t-[#dcdcdc] border-b-[#d8d7c6] bg-white">
        <h1 className="h-7 pl-[11px] font-['DejaVu_Sans',sans-serif] text-[15px] leading-7 font-bold text-[#5a689c] italic">Create Purchase Order</h1>
      </div>
      <AppToolbar />
      <div className="flex flex-1">
        <DocumentOverview />
        <main className="flex min-w-0 flex-1 flex-col pt-[11px] pl-1">
          <OrderHeader />
          <div className="flex">
            <div className="w-5 shrink-0 pt-[2px]">
              <IconButton label="Expand item overview"><CollapsedIcon /></IconButton>
            </div>
            <ItemTable />
          </div>
          <ItemToolbar />
          <ItemDetail />
        </main>
      </div>
    </div>
  )
}

export default App
